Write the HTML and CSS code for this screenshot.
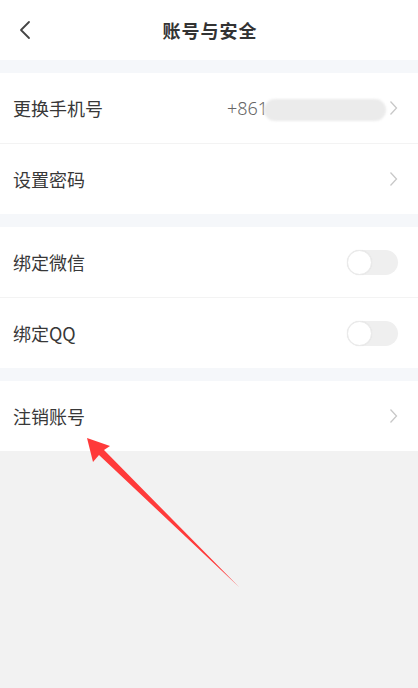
FILE: index.html
```html
<!DOCTYPE html>
<html lang="zh">
<head>
<meta charset="utf-8">
<link rel="stylesheet" href="styles.css">
</head>
<body>
<div class="page">
  <header class="nav">
    <svg class="back" width="14" height="20" viewBox="0 0 14 20"><path d="M11 2 L3 10 L11 18" fill="none" stroke="#444" stroke-width="1.8" stroke-linecap="round" stroke-linejoin="round"/></svg>
    <h1 class="title">账号与安全</h1>
  </header>
  <div class="gap"></div>
  <section class="group">
    <div class="row">
      <span class="label">更换手机号</span>
      <span class="value"><span class="phone">+861</span><span class="mask"></span></span>
      <svg class="chev" width="9" height="16" viewBox="0 0 9 16"><path d="M1.5 1.5 L7.5 8 L1.5 14.5" fill="none" stroke="#c8c8c8" stroke-width="1.3"/></svg>
    </div>
    <div class="divider"></div>
    <div class="row">
      <span class="label">设置密码</span>
      <svg class="chev" width="9" height="16" viewBox="0 0 9 16"><path d="M1.5 1.5 L7.5 8 L1.5 14.5" fill="none" stroke="#c8c8c8" stroke-width="1.3"/></svg>
    </div>
  </section>
  <div class="gap"></div>
  <section class="group">
    <div class="row">
      <span class="label">绑定微信</span>
      <span class="toggle"><span class="knob"></span></span>
    </div>
    <div class="divider"></div>
    <div class="row">
      <span class="label">绑定QQ</span>
      <span class="toggle"><span class="knob"></span></span>
    </div>
  </section>
  <div class="gap"></div>
  <section class="group">
    <div class="row">
      <span class="label">注销账号</span>
      <svg class="chev" width="9" height="16" viewBox="0 0 9 16"><path d="M1.5 1.5 L7.5 8 L1.5 14.5" fill="none" stroke="#c8c8c8" stroke-width="1.3"/></svg>
    </div>
  </section>
  <div class="rest"></div>
  <svg class="arrow" width="418" height="688" viewBox="0 0 418 688"><polygon points="87,438 110,446 104,450 239,587 99,455 93,462" fill="#ff3a3a"/></svg>
</div>
</body>
</html>
```
FILE: styles.css
```css
* { box-sizing: border-box; margin: 0; padding: 0; }
html, body { width: 418px; height: 688px; overflow: hidden; }
body { font-family: "Noto Sans CJK SC", "Noto Sans", sans-serif; background: #f2f2f2; }
.page { position: relative; width: 418px; height: 688px; display: flex; flex-direction: column; }
.nav { height: 60px; background: #fff; display: flex; align-items: center; justify-content: center; position: relative; }
.back { position: absolute; left: 18px; top: 20px; }
.title { font-size: 18px; font-weight: 700; color: #333; letter-spacing: 1px; margin-left: 2px; }
.gap { height: 13px; background: #f5f7fa; }
.group { background: #fff; }
.row { height: 70px; display: flex; align-items: center; padding: 0 20px 0 13px; }
.label { font-size: 18px; color: #383838; flex: 1; }
.value { display: flex; align-items: center; margin-right: 3px; }
.phone { font-size: 18px; color: #666; font-family: "Noto Sans", sans-serif; font-weight: 300; }
.mask { width: 122px; height: 22px; margin-left: -4px; margin-top: 4px; background: #ebebeb; border-radius: 11px; filter: blur(1.2px); }
.chev { display: block; }
.divider { height: 1px; background: #f3f3f3; }
.toggle { width: 51px; height: 25px; border-radius: 13px; background: #efefef; position: relative; }
.knob { position: absolute; left: 0; top: 0; width: 25px; height: 25px; border-radius: 50%; background: #fff; box-shadow: 0 0 1px #ddd; border: 1px solid #eaeaea; }
.rest { flex: 1; background: #f2f2f2; }
.arrow { position: absolute; left: 0; top: 0; pointer-events: none; }
```
